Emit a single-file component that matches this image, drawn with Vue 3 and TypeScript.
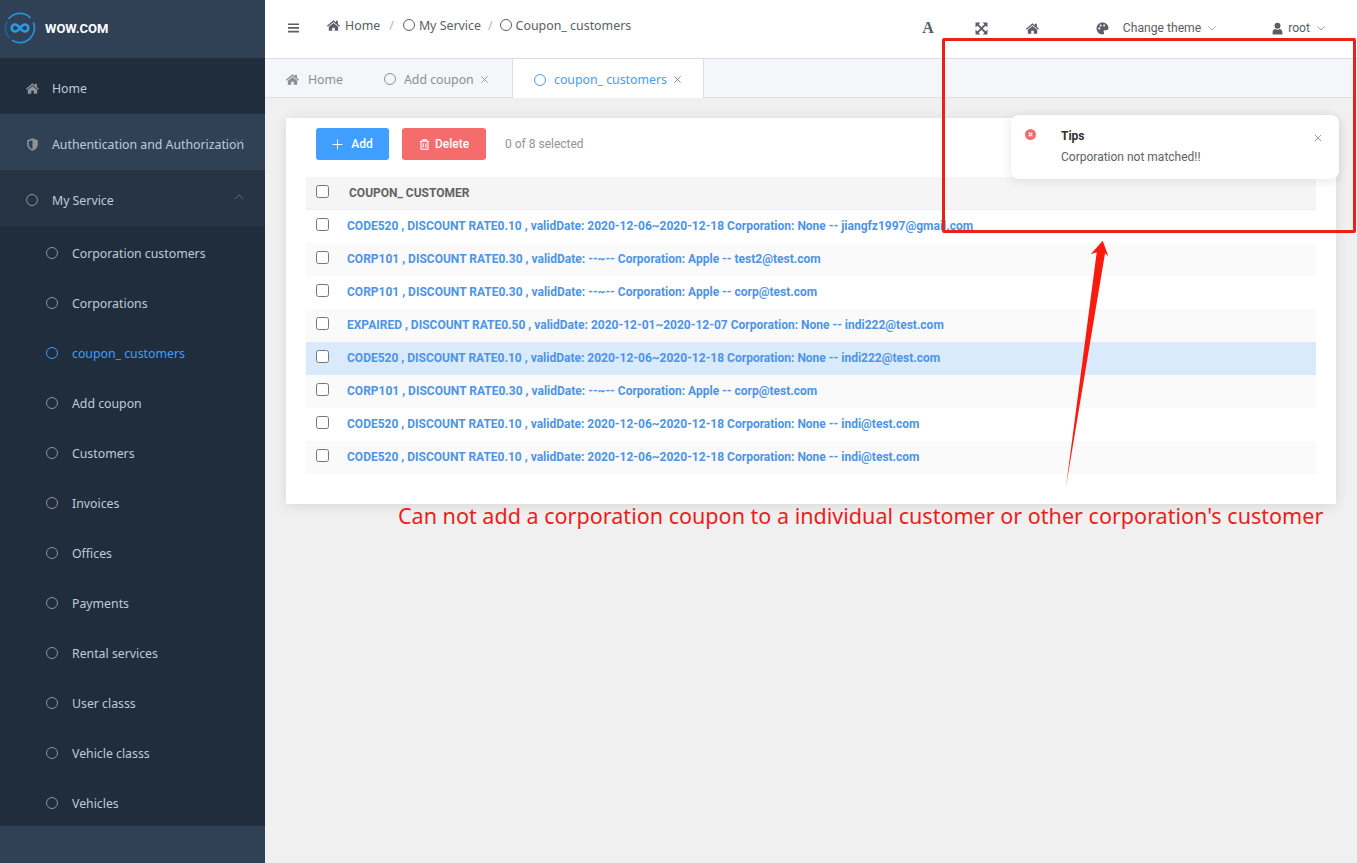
<template>
  <div class="layout">
    <aside class="sidebar">
      <div class="logo">
        <svg class="logo-mark" viewBox="0 0 32 32" fill="none">
          <path d="M4.500 7A14.600 14.600 0 0 1 26.500 5.800" stroke="#2b8fd8" stroke-width="1.700" />
          <path d="M29.400 10.500A14.600 14.600 0 0 1 8 28.300" stroke="#2b8fd8" stroke-width="1.700" />
          <path d="M5.500 26.200A14.600 14.600 0 0 1 2.900 9.500" stroke="#1c6197" stroke-width="1.700" />
          <path d="M16 16c-2-2.500-3.300-3.500-4.800-3.500a3.500 3.500 0 0 0 0 7c1.500 0 2.800-1 4.800-3.500s3.300-3.500 4.800-3.500a3.500 3.500 0 0 1 0 7c-1.500 0-2.800-1-4.800-3.500z" stroke="#2b9ae4" stroke-width="2.600" />
        </svg>
        <span class="logo-text">WOW.COM</span>
      </div>
      <nav class="menu">
        <div class="menu-item home">
          <svg class="menu-icon" viewBox="0 0 24 24" fill="currentColor"><path d="M12 3.500 1.500 12.400l1.300 1.500L12 6.200l9.200 7.700 1.300-1.500-3.500-3V4.500h-3v2.400zM12 7.800 4.500 14v6.500h5.500v-5h4v5h5.500V14z" /></svg>
          <span>Home</span>
        </div>
        <div class="menu-item auth">
          <svg class="menu-icon" viewBox="0 0 24 24" fill="currentColor"><path d="M12 2 3.500 5v6.500c0 5 3.500 8.800 8.500 10.500 5-1.700 8.500-5.500 8.500-10.500V5zm0 2.600V19.500c-3.700-1.500-6-4.400-6-8V6.800z" /></svg>
          <span>Authentication and Authorization</span>
          <svg class="chevron" viewBox="0 0 12 12" fill="none" stroke="currentColor"><path d="M1 3.500 6 8.500l5-5" /></svg>
        </div>
        <div class="menu-item service">
          <span class="ring"></span>
          <span>My Service</span>
          <svg class="chevron" viewBox="0 0 12 12" fill="none" stroke="currentColor"><path d="M1 8.500 6 3.500l5 5" /></svg>
        </div>
        <div class="submenu">
          <div v-for="item in subItems" :key="item" class="sub-item" :class="{ active: item === 'coupon_ customers' }">
            <span class="ring"></span>
            <span>{{ item }}</span>
          </div>
        </div>
      </nav>
    </aside>

    <main class="main">
      <header class="navbar">
        <svg class="hamburger" viewBox="0 0 12 10" fill="currentColor"><path d="M0 0h12v1.800H0zM0 4h12v1.800H0zM0 8h12v1.800H0z" /></svg>
        <div class="crumbs">
          <svg class="crumb-home" viewBox="0 0 24 24" fill="currentColor"><path d="M12 3.500 1.500 12.400l1.300 1.500L12 6.200l9.200 7.700 1.300-1.500-3.500-3V4.500h-3v2.400zM12 7.800 4.500 14v6.500h5.500v-5h4v5h5.500V14z" /></svg>
          <span>Home</span>
          <span class="sep">/</span>
          <span class="ring dark"></span>
          <span>My Service</span>
          <span class="sep tight">/</span>
          <span class="ring dark"></span>
          <span>Coupon_ customers</span>
        </div>
        <div class="tools">
          <span class="tool-a">A</span>
          <svg class="tool-icon expand" viewBox="0 0 24 24" fill="currentColor" stroke="none">
            <path d="M1 1h9L1 10zM23 1v9L14 1zM1 23v-9l9 9zM23 23h-9l9-9z" />
            <path d="M4 4l16 16M20 4 4 20" stroke="currentColor" stroke-width="3.500" />
          </svg>
          <svg class="tool-icon house" viewBox="0 0 24 24" fill="currentColor"><path d="M12 3.500 1.500 12.400l1.300 1.500L12 6.200l9.200 7.700 1.300-1.500-3.500-3V4.500h-3v2.400zM12 7.800 4.500 14v6.500h5.500v-5h4v5h5.500V14z" /></svg>
          <div class="theme">
            <svg class="tool-icon palette" viewBox="0 0 24 24" fill="currentColor"><path fill-rule="evenodd" d="M12 1C5.900 1 1 5.900 1 12s4.900 11 11 11c2 0 3-1.200 3-2.600 0-1.500-1-2-1-3.200 0-1.200 1-2 2.200-2H19c2.500 0 4-1.800 4-4.200C23 5.500 18 1 12 1zM6 13.700a1.900 1.900 0 1 1 0-3.800 1.900 1.900 0 0 1 0 3.800zm2.500-5.500a1.900 1.900 0 1 1 0-3.800 1.900 1.900 0 0 1 0 3.800zm6.500 0a1.900 1.900 0 1 1 0-3.800 1.900 1.900 0 0 1 0 3.800z" /></svg>
            <span>Change theme</span>
            <svg class="caret" viewBox="0 0 12 12" fill="none" stroke="currentColor"><path d="M1.500 4 6 8.500 10.500 4" /></svg>
          </div>
          <div class="user">
            <svg class="user-icon" viewBox="0 0 20 24" fill="currentColor"><path d="M10 1.500a5.500 5.500 0 1 1 0 11 5.500 5.500 0 0 1 0-11zM1 23v-4.500C1 15.500 3.500 13 6 13c1 .8 2.400 1.300 4 1.300s3-.5 4-1.300c2.500 0 5 2.500 5 5.500V23z" /></svg>
            <span>root</span>
            <svg class="caret" viewBox="0 0 12 12" fill="none" stroke="currentColor"><path d="M1.500 4 6 8.500 10.500 4" /></svg>
          </div>
        </div>
      </header>

      <div class="tabs">
        <div class="tab first">
          <svg class="tab-home" viewBox="0 0 24 24" fill="currentColor"><path d="M12 3.500 1.500 12.400l1.300 1.500L12 6.200l9.200 7.700 1.300-1.500-3.500-3V4.500h-3v2.400zM12 7.800 4.500 14v6.500h5.500v-5h4v5h5.500V14z" /></svg>
          <span>Home</span>
        </div>
        <div class="tab second">
          <span class="ring dim"></span>
          <span>Add coupon</span>
          <svg class="tab-close" viewBox="0 0 10 10" fill="none" stroke="currentColor"><path d="M1.500 1.500l7 7M8.500 1.500l-7 7" /></svg>
        </div>
        <div class="tab current">
          <span class="ring blue"></span>
          <span>coupon_ customers</span>
          <svg class="tab-close" viewBox="0 0 10 10" fill="none" stroke="currentColor"><path d="M1.500 1.500l7 7M8.500 1.500l-7 7" /></svg>
        </div>
      </div>

      <div class="content">
        <section class="card">
          <div class="toolbar">
            <button class="btn add">
              <svg class="btn-icon" viewBox="0 0 12 12" stroke="currentColor" fill="none"><path d="M6 .5v11M.5 6h11" /></svg>
              Add
            </button>
            <button class="btn del">
              <svg class="btn-icon trash" viewBox="0 0 12 12" stroke="currentColor" stroke-width="1.200" fill="none"><path d="M1 2.500h10M4 2.500V1h4v1.500M2.200 2.500v8.700h7.600V2.500M4.500 4.500v4.800M7.500 4.500v4.800" /></svg>
              Delete
            </button>
            <span class="count">0 of 8 selected</span>
          </div>
          <div class="thead">
            <input type="checkbox" class="check" />
            <span class="th-label">COUPON_ CUSTOMER</span>
          </div>
          <div
            v-for="(row, i) in rows"
            :key="i"
            class="row"
            :class="{ striped: i % 2 === 1, selected: i === 4 }"
          >
            <input type="checkbox" class="check" />
            <a class="row-link">{{ row }}</a>
          </div>
        </section>
      </div>
    </main>

    <div class="notice">
      <span class="notice-icon">
        <svg viewBox="0 0 12 12" stroke="#fff" fill="none" stroke-width="1.300"><path d="M4 4l4 4M8 4l-4 4" /></svg>
      </span>
      <div class="notice-body">
        <div class="notice-title">Tips</div>
        <div class="notice-text">Corporation not matched!!</div>
      </div>
      <svg class="notice-close" viewBox="0 0 10 10" stroke="currentColor" stroke-width="1.200" fill="none"><path d="M1 1l8 8M9 1l-8 8" /></svg>
    </div>

    <!-- red markup drawn on top of the screenshot -->
    <div class="markup-box"></div>
    <svg class="markup-arrow" viewBox="0 0 60 260" fill="#fb1a0e"><path d="M42.700 4.700 48.300 20 45 17.300 6 250.700 36.700 16.300 30.700 18.300z" /></svg>
    <div class="markup-text">Can not add a corporation coupon to a individual customer or other corporation's customer</div>
  </div>
</template>

<script setup lang="ts">
const subItems: string[] = [
  'Corporation customers',
  'Corporations',
  'coupon_ customers',
  'Add coupon',
  'Customers',
  'Invoices',
  'Offices',
  'Payments',
  'Rental services',
  'User classs',
  'Vehicle classs',
  'Vehicles',
]

const rows: string[] = [
  'CODE520 , DISCOUNT RATE0.10 , validDate: 2020-12-06~2020-12-18 Corporation: None -- jiangfz1997@gmail.com',
  'CORP101 , DISCOUNT RATE0.30 , validDate: --~-- Corporation: Apple -- test2@test.com',
  'CORP101 , DISCOUNT RATE0.30 , validDate: --~-- Corporation: Apple -- corp@test.com',
  'EXPAIRED , DISCOUNT RATE0.50 , validDate: 2020-12-01~2020-12-07 Corporation: None -- indi222@test.com',
  'CODE520 , DISCOUNT RATE0.10 , validDate: 2020-12-06~2020-12-18 Corporation: None -- indi222@test.com',
  'CORP101 , DISCOUNT RATE0.30 , validDate: --~-- Corporation: Apple -- corp@test.com',
  'CODE520 , DISCOUNT RATE0.10 , validDate: 2020-12-06~2020-12-18 Corporation: None -- indi@test.com',
  'CODE520 , DISCOUNT RATE0.10 , validDate: 2020-12-06~2020-12-18 Corporation: None -- indi@test.com',
]
</script>

<style>
html,
body {
  margin: 0;
  height: 100%;
  overflow: hidden;
}
</style>

<style scoped>
.layout {
  position: relative;
  display: flex;
  width: 1357px;
  height: 863px;
  overflow: hidden;
  background: #f0f0f0;
  font-family: "Noto Sans", "Liberation Sans", sans-serif;
}

.sidebar {
  width: 265px;
  flex: none;
  background: #304156;
  display: flex;
  flex-direction: column;
}

.logo {
  height: 58px;
  box-sizing: border-box;
  display: flex;
  align-items: center;
  padding: 0 0 2px 4px;
  gap: 9px;
}

.logo-mark {
  width: 32px;
  height: 32px;
}

.logo-text {
  font-family: "Roboto", sans-serif;
  font-weight: 700;
  font-size: 13px;
  color: #fff;
}

.menu-item {
  position: relative;
  height: 56px;
  box-sizing: border-box;
  display: flex;
  align-items: center;
  padding: 4px 0 0 25px;
  font-size: 12.3px;
  color: #bfcbd9;
}

.menu-item.home {
  background: #1f2d3d;
}

.menu-item.service {
  background: #263445;
}

.menu-icon {
  width: 15px;
  height: 15px;
  margin-right: 12px;
  color: #909399;
}

.menu-item .ring {
  margin: 0 14px 0 1px;
}

.ring {
  display: inline-block;
  box-sizing: border-box;
  width: 12px;
  height: 12px;
  flex: none;
  border: 1.3px solid #909399;
  border-radius: 50%;
}

.ring.dark {
  border-color: #5a5e66;
  margin-right: 4px;
}

.ring.dim {
  border-color: #8b8f97;
  margin-right: 8px;
}

.ring.blue {
  border-color: #409eff;
  margin-right: 8px;
}

.chevron {
  position: absolute;
  left: 234px;
  top: 22px;
  width: 10px;
  height: 10px;
  color: #6b7888;
}

.sub-item {
  height: 50px;
  box-sizing: border-box;
  display: flex;
  align-items: center;
  padding: 4px 0 0 46px;
  font-size: 12.3px;
  color: #bfcbd9;
  background: #1f2d3d;
}

.sub-item .ring {
  margin-right: 14px;
}

.sub-item.active {
  color: #409eff;
}

.sub-item.active .ring {
  border-color: #409eff;
}

.main {
  flex: 1;
  min-width: 0;
  display: flex;
  flex-direction: column;
}

.navbar {
  height: 59px;
  flex: none;
  display: flex;
  box-sizing: border-box;
  background: #fff;
  border-bottom: 1px solid #d8dce5;
  align-items: flex-start;
  color: #5a5e66;
}

.hamburger {
  width: 11px;
  height: 10px;
  margin: 23px 0 0 23px;
  color: #5a5e66;
}

.crumbs {
  display: flex;
  align-items: center;
  height: 18px;
  margin: 16px 0 0 27px;
  font-size: 12.4px;
  color: #5a5e66;
}

.crumb-home {
  width: 15px;
  height: 15px;
  margin-right: 4px;
}

.sep {
  margin: 0 9px;
  color: #b4b8bf;
}

.sep.tight {
  margin: 0 7px;
}

.tools {
  display: flex;
  align-items: center;
  height: 18px;
  margin: 19px 0 0 auto;
  font-size: 12.15px;
  font-family: "Roboto", sans-serif;
}

.tool-a {
  font-family: "Liberation Serif", serif;
  font-weight: 700;
  font-size: 16px;
  color: #5a5e66;
  margin-right: 41px;
}

.tool-icon {
  width: 13px;
  height: 13px;
  color: #5a5e66;
}

.expand {
  margin-right: 37px;
}

.house {
  margin-right: 56px;
  width: 15px;
  height: 15px;
}

.theme,
.user {
  display: flex;
  align-items: center;
}

.palette {
  margin-right: 14px;
}

.theme {
  margin-right: 55px;
}

.user {
  margin-right: 31px;
}

.user-icon {
  width: 11px;
  height: 13px;
  margin-right: 5px;
}

.caret {
  width: 10px;
  height: 10px;
  margin-left: 6px;
  color: #8a8e96;
}

.tabs {
  height: 39px;
  flex: none;
  box-sizing: border-box;
  display: flex;
  background: #f4f6fa;
  border-bottom: 1px solid #dcdfe6;
  font-size: 12.3px;
  color: #8a8e96;
}

.tab {
  display: flex;
  align-items: center;
  box-sizing: border-box;
  padding-top: 2px;
}

.tab.first {
  width: 99px;
  padding-left: 20px;
}

.tab-home {
  width: 15px;
  height: 15px;
  margin-right: 8px;
}

.tab.second {
  width: 148px;
  padding-left: 20px;
}

.tab.current {
  width: 192px;
  height: 39px;
  padding-left: 21px;
  background: #fff;
  border-left: 1px solid #dcdfe6;
  border-right: 1px solid #dcdfe6;
  color: #409eff;
}

.tab-close {
  width: 9px;
  height: 9px;
  margin-left: 6px;
  color: #909399;
}

.current .tab-close {
  color: #5a8fc8;
}

.content {
  flex: 1;
  padding: 20px 21px 0 21px;
  background: #f0f0f0;
}

.card {
  height: 386px;
  box-sizing: border-box;
  padding: 10px 20px 0;
  background: #fff;
  box-shadow: 0 2px 12px rgba(0, 0, 0, 0.1);
}

.toolbar {
  display: flex;
  align-items: center;
  height: 32px;
  margin-bottom: 17px;
  padding-left: 10px;
}

.btn {
  display: flex;
  align-items: center;
  justify-content: center;
  height: 32px;
  border: 0;
  border-radius: 3px;
  color: #fff;
  font-family: "Roboto", sans-serif;
  font-weight: 500;
  font-size: 12px;
  padding: 0;
}

.btn.add {
  width: 73px;
  background: #409eff;
  margin-right: 13px;
}

.btn.del {
  width: 84px;
  background: #f56c6c;
  margin-right: 19px;
}

.btn-icon {
  width: 11px;
  height: 11px;
  margin-right: 8px;
}

.btn-icon.trash {
  margin-right: 5px;
}

.count {
  font-family: "Roboto", sans-serif;
  font-size: 12px;
  color: #909399;
}

.thead,
.row {
  display: flex;
  align-items: center;
  padding-left: 10px;
}

.thead {
  height: 33px;
  background: #f5f5f5;
  border-bottom: 1px solid #ebeef5;
  box-sizing: border-box;
  font-family: "Roboto", sans-serif;
  font-weight: 700;
  font-size: 12px;
  color: #606266;
}

.th-label {
  margin-left: 20px;
}

.check {
  width: 13px;
  height: 13px;
  margin: 0 0 4px;
  flex: none;
}

.row {
  height: 33px;
  background: #fff;
}

.row.striped {
  background: #fafafa;
}

.row.selected {
  background: #d9eafc;
}

.row-link {
  margin: 0 0 2px 18px;
  font-family: "Roboto", sans-serif;
  font-weight: 700;
  font-size: 12px;
  color: #4d94e8;
  white-space: nowrap;
}

/* floats over the card */
.notice {
  position: absolute;
  left: 1011px;
  top: 115px;
  width: 328px;
  height: 64px;
  border-radius: 8px;
  background: #fff;
  box-shadow: 0 2px 12px rgba(0, 0, 0, 0.1);
  display: flex;
  font-family: "Roboto", sans-serif;
}

.notice-icon {
  position: absolute;
  left: 14px;
  top: 14px;
  width: 11px;
  height: 11px;
  border-radius: 50%;
  background: #f56c6c;
}

.notice-icon svg {
  display: block;
  width: 11px;
  height: 11px;
}

.notice-body {
  margin-left: 50px;
  padding-top: 13px;
}

.notice-title {
  font-size: 12px;
  font-weight: 700;
  line-height: 16px;
  color: #303133;
}

.notice-text {
  margin-top: 5px;
  font-size: 12px;
  line-height: 16px;
  color: #606266;
}

.notice-close {
  position: absolute;
  left: 303px;
  top: 19px;
  width: 8px;
  height: 8px;
  color: #909399;
}

.markup-box {
  position: absolute;
  left: 942px;
  top: 38px;
  width: 414px;
  height: 195px;
  box-sizing: border-box;
  border: 3px solid #e8211b;
  border-radius: 2px;
}

.markup-arrow {
  position: absolute;
  left: 1060px;
  top: 236px;
  width: 60px;
  height: 260px;
}

.markup-text {
  position: absolute;
  left: 398px;
  top: 501px;
  font-size: 21.55px;
  line-height: 30px;
  color: #ee1c1c;
  white-space: nowrap;
}
</style>
